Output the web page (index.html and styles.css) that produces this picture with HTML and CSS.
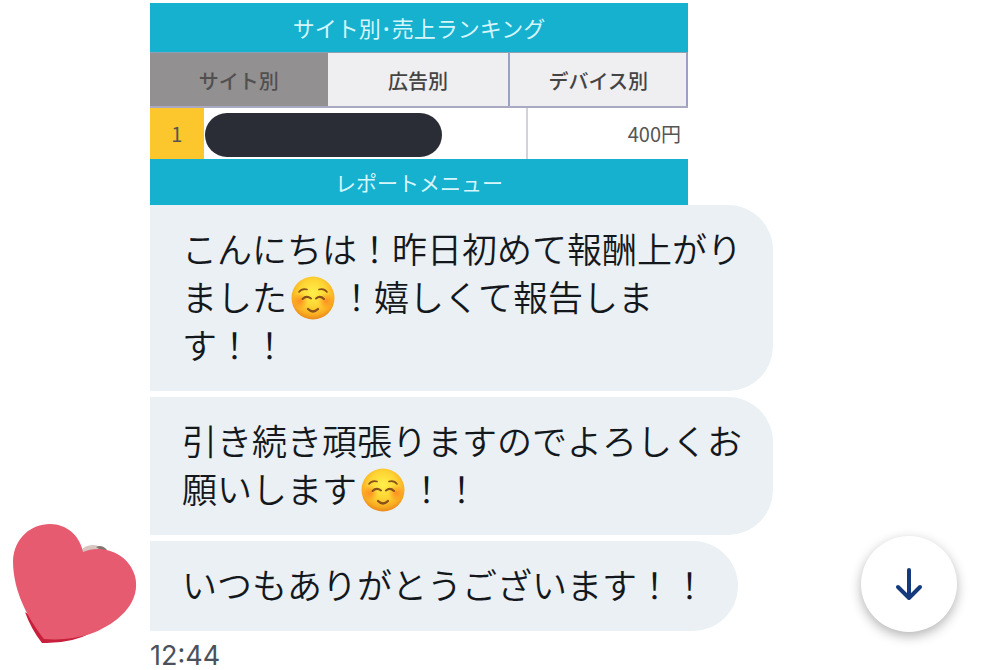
FILE: index.html
```
<!DOCTYPE html>
<html lang="ja">
<head>
    <meta charset="UTF-8">
    <meta name="viewport" content="width=device-width, initial-scale=1.0">
    <title>メッセージ</title>
    <link rel="stylesheet" href="styles.css">
</head>
<body>
    <!-- 絵文字の共通定義 -->
    <svg class="defs" width="0" height="0" aria-hidden="true">
        <defs>
            <radialGradient id="face" cx="50%" cy="38%" r="63%">
                <stop offset="0" stop-color="#fff04a"/>
                <stop offset="0.5" stop-color="#fed433"/>
                <stop offset="0.8" stop-color="#f9ae22"/>
                <stop offset="1" stop-color="#e8841a"/>
            </radialGradient>
            <radialGradient id="cheek">
                <stop offset="0" stop-color="#ff7a1c" stop-opacity="0.75"/>
                <stop offset="1" stop-color="#ff7a1c" stop-opacity="0"/>
            </radialGradient>
            <symbol id="smile" viewBox="0 0 44 44">
                <circle cx="22" cy="22" r="21.5" fill="url(#face)"/>
                <circle cx="9" cy="25" r="8" fill="url(#cheek)"/>
                <circle cx="35" cy="25" r="8" fill="url(#cheek)"/>
                <g fill="none" stroke="#86501a" stroke-linecap="round">
                    <path d="M8 16 Q11 12 16 13.5 M28 13.5 Q33 12 36 16" stroke-width="1.6"/>
                    <path d="M11.5 23 Q15.5 19 20 22.5 M25 22.5 Q29 19 33 23" stroke-width="2"/>
                    <path d="M17 33 Q22 38 27 33" stroke-width="2.2"/>
                </g>
            </symbol>
        </defs>
    </svg>

    <main class="chat">
        <!-- リアクション -->
        <div class="reaction">
            <svg class="heart" viewBox="0 0 124 121" role="img" aria-label="ハート">
                <path d="M67 27 Q77 16 92 25 L88 32 H69 Z" fill="#d8c5bf"/>
                <path d="M83 23 Q89 20 94 26 L89 27 Z" fill="#81766f"/>
                <path d="M12 88 Q18 105 29 119 Q58 120 80 108 L70 100 L30 100 Z" fill="#c8203c"/>
                <path d="M31 115 C17 97 0 69 0 37 C1 14 18 0 37 0 C54 0 67 12 70 28 C88 20 115 28 122 52 C129 80 102 101 77 110 Q56 117 31 115 Z" fill="#e65b6f"/>
            </svg>
        </div>

        <div class="thread">
            <!-- 売上レポート -->
            <section class="report">
                <h2 class="report-title">サイト別･売上ランキング</h2>
                <div class="tabs">
                    <button type="button" class="active">サイト別</button>
                    <button type="button">広告別</button>
                    <button type="button">デバイス別</button>
                </div>
                <table class="ranking">
                    <tr>
                        <td class="rank">1</td>
                        <td class="site"><div class="mask"></div></td>
                        <td class="amount">400円</td>
                    </tr>
                </table>
                <h2 class="report-menu">レポートメニュー</h2>
            </section>

            <!-- メッセージ -->
            <p class="bubble">こんにちは！昨日初めて報酬上がりました<svg class="emoji" role="img" aria-label="笑顔"><use href="#smile"/></svg>！嬉しくて報告します！！</p>
            <p class="bubble">引き続き頑張りますのでよろしくお願いします<svg class="emoji" role="img" aria-label="笑顔"><use href="#smile"/></svg>！！</p>
            <p class="bubble">いつもありがとうございます！！</p>
            <time class="time" datetime="12:44">12:44</time>
        </div>
    </main>

    <button type="button" class="scroll-btn" aria-label="一番下へ">
        <svg viewBox="0 0 28 34" aria-hidden="true">
            <path d="M14 3 V31 M3 20 L14 31 L25 20"/>
        </svg>
    </button>
</body>
</html>
```
FILE: styles.css
```
* {
    box-sizing: border-box;
}
body {
    margin: 0;
    background: #fff;
    color: #14181d;
    font-family: "Noto Sans CJK JP", sans-serif;
    overflow: hidden;
}
.defs {
    position: absolute;
}
.chat {
    display: flex;
    padding-top: 3px;
}
.reaction {
    flex: 0 0 150px;
    display: flex;
    align-items: flex-end;
    padding: 0 13px 24px;
}
.heart {
    width: 100%;
    height: auto;
}
.thread {
    flex: 0 1 623px;
    display: flex;
    flex-direction: column;
    align-items: flex-start;
    gap: 6px;
}

/* 売上レポート */
.report {
    width: 100%;
    max-width: 538px;
    margin-bottom: -6px;
}
.report-title,
.report-menu {
    margin: 0;
    background: #15b1cf;
    color: #d5f6fc;
    font-weight: 400;
    text-align: center;
}
.report-title {
    font-size: 22px;
    line-height: 49px;
}
.report-menu {
    font-size: 21px;
    line-height: 46px;
}
.tabs {
    display: grid;
    grid-template-columns: 33fr 34fr 33fr;
    border-top: 1px solid #8f9fb4;
    border-bottom: 2px solid #aaa9c4;
}
.tabs button {
    height: 53px;
    padding: 2px 0 0;
    border: 0;
    border-right: 2px solid #9ba1c4;
    background: #efeef0;
    color: #444;
    font-family: inherit;
    font-size: 20px;
    font-weight: 500;
}
.tabs button.active {
    background: #929091;
    color: #514f50;
    border-right: 0;
}
.ranking {
    width: 100%;
    table-layout: fixed;
    border-collapse: collapse;
    color: #555;
    font-size: 20px;
    line-height: 28px;
}
.ranking td {
    height: 51px;
    padding: 0;
}
.ranking .rank {
    width: 10%;
    background: #fbc72c;
    text-align: center;
}
.ranking .site {
    width: 60%;
    padding-left: 1px;
    border-right: 2px solid #d3d1db;
}
.mask {
    width: 74%;
    height: 44px;
    margin-top: 3px;
    border-radius: 22px;
    background: #2a2d35;
}
.ranking .amount {
    padding-right: 7px;
    text-align: right;
}

/* 吹き出し */
.bubble {
    margin: 0;
    padding: 19px 31px 23px 32px;
    border-radius: 0 45px 45px 0;
    background: #eaf0f3;
    font-size: 35px;
    font-weight: 350;
    line-height: 48px;
}
.emoji {
    width: 44px;
    height: 44px;
    margin: -8px 4px 0;
    vertical-align: middle;
}
.time {
    margin-top: 6px;
    color: #4b525b;
    font-family: Inter, sans-serif;
    font-size: 27px;
    line-height: 26px;
}

/* 下へスクロール */
.scroll-btn {
    position: fixed;
    right: 43px;
    bottom: 38px;
    display: flex;
    align-items: center;
    justify-content: center;
    width: 96px;
    height: 96px;
    border: 0;
    border-radius: 50%;
    background: #fff;
    box-shadow: 0 4px 12px rgba(0, 0, 0, 0.3);
    cursor: pointer;
}
.scroll-btn svg {
    width: 28px;
    height: 34px;
    fill: none;
    stroke: #143a7c;
    stroke-width: 4;
    stroke-linecap: round;
    stroke-linejoin: round;
}
```
